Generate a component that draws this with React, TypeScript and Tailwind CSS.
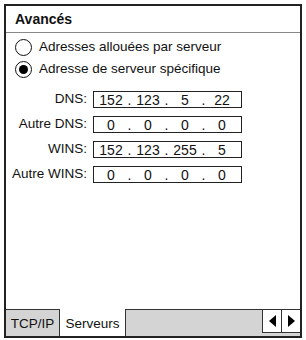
import React from "react";

const font = { fontFamily: '"Liberation Sans", Arial, sans-serif' };

function IpBox({ parts }: { parts: string[] }) {
  return (
    <div className="w-[149px] h-[17px] border border-[#222] flex items-center pl-[2px] text-[14px] leading-none text-[#111]">
      {parts.map((p, i) => (
        <React.Fragment key={i}>
          <span className="w-[30px] text-center">{p}</span>
          {i < 3 && <span className="w-[7px] text-center">.</span>}
        </React.Fragment>
      ))}
    </div>
  );
}

function IpRow({ label, parts }: { label: string; parts: string[] }) {
  return (
    <div className="flex items-center h-[17px]">
      <div className="w-[82px] text-right text-[13.5px] text-[#111] pr-[1px]">{label}</div>
      <div className="ml-[5px]">
        <IpBox parts={parts} />
      </div>
    </div>
  );
}

function Radio({ checked, label }: { checked?: boolean; label: string }) {
  return (
    <div className="flex items-center h-[22px] pl-[9px]">
      <div className="w-[17px] h-[17px] rounded-full border-[1.5px] border-[#111] flex items-center justify-center bg-white">
        {checked && <div className="w-[9px] h-[9px] rounded-full bg-black" />}
      </div>
      <span className="ml-[7px] text-[13.5px] text-[#111]">{label}</span>
    </div>
  );
}

export default function App() {
  return (
    <div className="w-[306px] h-[340px] bg-white pt-[4px] pl-[4px] pr-[4px] pb-[2px]" style={font}>
      <div className="h-full border-2 border-[#222] flex flex-col bg-white">
        <div className="h-[27px] border-b border-[#888] flex items-center pl-[9px] pt-[1px] font-bold text-[14px] text-[#111]">
          Avancés
        </div>
        <div className="flex-1 flex flex-col pt-[3px]">
          <Radio label="Adresses allouées par serveur" />
          <Radio checked label="Adresse de serveur spécifique" />
          <div className="flex flex-col gap-[8px] mt-[11px]">
            <IpRow label="DNS:" parts={["152", "123", "5", "22"]} />
            <IpRow label="Autre DNS:" parts={["0", "0", "0", "0"]} />
            <IpRow label="WINS:" parts={["152", "123", "255", "5"]} />
            <IpRow label="Autre WINS:" parts={["0", "0", "0", "0"]} />
          </div>
        </div>
        <div className="h-[27px] flex text-[13.5px] text-[#111]">
          <div className="w-[54px] bg-[#d4d4d4] border-t border-r border-[#333] flex items-center justify-center pt-[3px]">
            TCP/IP
          </div>
          <div className="w-[65px] bg-white flex items-center justify-center pt-[3px]">Serveurs</div>
          <div className="flex-1 bg-[#d4d4d4] border-t border-l border-[#333] flex justify-end">
            <div className="h-[24px] w-[38px] flex border-l border-b border-[#333] bg-white -mt-[1px] border-t">
              <div className="w-[19px] flex items-center justify-center border-r border-[#333]">
                <svg width="7" height="12" viewBox="0 0 7 12">
                  <path d="M7 0 L0 6 L7 12 Z" fill="#000" />
                </svg>
              </div>
              <div className="flex-1 flex items-center justify-center">
                <svg width="7" height="12" viewBox="0 0 7 12">
                  <path d="M0 0 L7 6 L0 12 Z" fill="#000" />
                </svg>
              </div>
            </div>
          </div>
        </div>
      </div>
    </div>
  );
}
